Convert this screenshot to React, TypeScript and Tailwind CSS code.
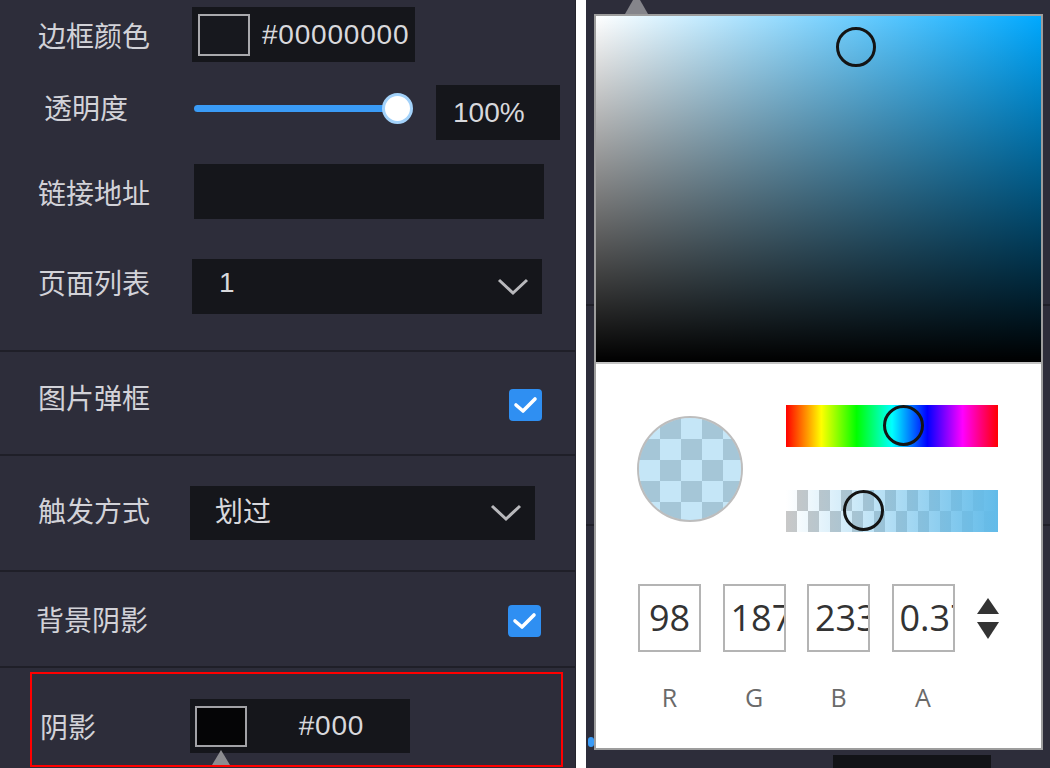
import React from "react";

const Chevron = () => (
  <svg width="32" height="18" viewBox="0 0 32 18">
    <polyline points="2,2 16,15 30,2" fill="none" stroke="#b8b8bc" strokeWidth="3" />
  </svg>
);

const Check = () => (
  <div className="w-[33px] h-[32px] rounded-[4px] bg-[#2f8ff2] flex items-center justify-center">
    <svg width="33" height="32" viewBox="0 0 33 32">
      <polyline points="7,16 14,22 26,10" fill="none" stroke="#ffffff" strokeWidth="3.6" strokeLinecap="round" strokeLinejoin="round" />
    </svg>
  </div>
);

const Divider = () => <div className="h-[2px] w-full bg-[#1f1f28] shrink-0" />;

export default function App() {
  return (
    <div className="w-[1050px] h-[768px] flex overflow-hidden bg-[#2d2d3a] font-['Noto_Sans_CJK_SC',sans-serif] text-[#d2d2d8]">
      {/* Left property panel */}
      <div className="w-[576px] h-full shrink-0 bg-[#2d2d3a] border-r border-[#24242d] flex flex-col">
        {/* Section 1 */}
        <div className="h-[350px] shrink-0 flex flex-col pt-[7px]">
          <div className="flex items-center h-[55px]">
            <div className="w-[192px] pl-[38px] text-[28px] leading-[34px]">边框颜色</div>
            <div className="w-[223px] h-[55px] bg-[#15161b] flex items-center pl-[6px]">
              <div className="w-[52px] h-[42px] border-2 border-[#a9a9ad] bg-[#17181e]" />
              <span className="ml-[12px] text-[28px] leading-[34px] tracking-[0.8px] font-['Liberation_Sans',sans-serif] text-[#d8d8dc]">#00000000</span>
            </div>
          </div>
          <div className="flex items-center h-[55px] mt-[23px]">
            <div className="w-[194px] pl-[44px] pb-[12px] text-[28px] leading-[34px]">透明度</div>
            <div className="relative w-[219px] h-[31px] mb-[9px] flex items-center">
              <div className="w-[203px] h-[7px] rounded-full bg-[#3a9bf6]" />
              <div className="absolute left-[188px] top-0 w-[31px] h-[31px] rounded-full bg-white border-[3px] border-[#a3d2fa]" />
            </div>
            <div className="ml-[23px] w-[124px] h-[55px] bg-[#15161b] flex items-center pl-[17px] text-[28px] leading-[34px] font-['Liberation_Sans',sans-serif] text-[#d8d8dc]">100%</div>
          </div>
          <div className="flex items-center h-[55px] mt-[24px]">
            <div className="w-[194px] pl-[38px] text-[28px] leading-[34px]">链接地址</div>
            <div className="w-[350px] h-[55px] bg-[#15161b]" />
          </div>
          <div className="flex items-center h-[55px] mt-[40px]">
            <div className="w-[192px] pl-[38px] pb-[10px] text-[28px] leading-[34px]">页面列表</div>
            <div className="w-[350px] h-[55px] bg-[#15161b] flex items-center justify-between pl-[27px] pr-[13px]">
              <span className="text-[28px] leading-[34px] font-['Liberation_Sans',sans-serif] text-[#d8d8dc] pb-[8px]">1</span>
              <Chevron />
            </div>
          </div>
        </div>
        <Divider />
        {/* Section 2 */}
        <div className="h-[102px] shrink-0 flex items-center justify-between pl-[38px] pr-[33px]">
          <div className="pb-[12px] text-[28px] leading-[34px]">图片弹框</div>
          <div className="pt-[3px]"><Check /></div>
        </div>
        <Divider />
        {/* Section 3 */}
        <div className="h-[114px] shrink-0 flex items-center">
          <div className="w-[190px] pl-[38px] pb-[6px] text-[28px] leading-[34px]">触发方式</div>
          <div className="w-[345px] h-[54px] bg-[#15161b] flex items-center justify-between pl-[25px] pr-[13px]">
            <span className="text-[28px] leading-[34px] text-[#d8d8dc] pb-[6px]">划过</span>
            <Chevron />
          </div>
        </div>
        <Divider />
        {/* Section 4 */}
        <div className="h-[94px] shrink-0 flex items-center justify-between pl-[36px] pr-[34px]">
          <div className="text-[28px] leading-[34px]">背景阴影</div>
          <div className="pt-[4px]"><Check /></div>
        </div>
        <Divider />
        {/* Section 5 */}
        <div className="flex-1 pt-[4px] pl-[30px]">
          <div className="w-[533px] h-[95px] border-2 border-[#ff0000] flex items-start pt-[25px] pl-[8px]">
            <div className="flex items-center h-[54px]">
              <div className="w-[150px] text-[28px] leading-[34px]">阴影</div>
              <div className="relative w-[220px] h-[54px] bg-[#15161b] flex items-center pl-[5px]">
                <div className="w-[52px] h-[41px] border-2 border-[#a2a2a6] bg-[#050506]" />
                <span className="flex-1 text-center pl-[6px] text-[28px] leading-[34px] tracking-[0.8px] font-['Liberation_Sans',sans-serif] text-[#d8d8dc]">#000</span>
                <svg className="absolute left-[22px] top-[51px]" width="18" height="15" viewBox="0 0 18 15">
                  <polygon points="9,0 18,15 0,15" fill="#8c8c90" />
                </svg>
              </div>
            </div>
          </div>
        </div>
      </div>

      {/* White gap */}
      <div className="w-[10px] h-full shrink-0 bg-white" />

      {/* Right area with color picker popup */}
      <div className="relative flex-1 h-full bg-[#2d2d3a]">
        <div className="h-full flex flex-col">
          <div className="h-[306px] border-b-2 border-[#1f1f28]" />
          <div className="h-[220px] border-b-2 border-[#1f1f28]" />
          <div className="flex-1 flex items-end pl-[247px]">
            <div className="w-[158px] h-[13px] bg-[#121317]" />
          </div>
        </div>
        <div className="absolute left-[2px] top-[737px] w-[6px] h-[10px] rounded-full bg-[#3a9bf6]" />
        <svg className="absolute left-[39px] top-0" width="23" height="14" viewBox="0 0 23 14">
          <polygon points="8,0 15,0 23,14 0,14" fill="#85858b" />
        </svg>

        <div className="absolute left-[8px] top-[14px] w-[449px] h-[736px] bg-white border-2 border-[#9d9d9d] flex flex-col">
          {/* Saturation / value area */}
          <div className="relative h-[348px] shrink-0 border-b-2 border-[#c4c4c4] bg-[linear-gradient(to_top,#000,transparent),linear-gradient(to_right,#fff,#00a9ff)]">
            <div className="absolute left-[240px] top-[11px] w-[40px] h-[40px] rounded-full border-[3px] border-[#141414]" />
          </div>

          {/* Preview + sliders */}
          <div className="flex items-center pl-[41px] pt-[41px]">
            <div className="relative w-[106px] h-[106px] rounded-full border-2 border-[#bdbdbd] overflow-hidden bg-[conic-gradient(#cccccc_25%,#ffffff_0_50%,#cccccc_0_75%,#ffffff_0)] bg-[length:42px_42px]">
              <div className="absolute inset-0 bg-[rgba(98,187,233,0.37)]" />
            </div>
            <div className="ml-[43px] flex flex-col gap-[43px]">
              <div className="relative w-[212px] h-[42px] bg-[linear-gradient(to_right,#f00,#ff0,#0f0,#0ff,#00f,#f0f,#f00)]">
                <div className="absolute left-[97px] top-0 w-[41px] h-[41px] rounded-full border-[3.5px] border-[#141414]" />
              </div>
              <div className="relative w-[212px] h-[42px] bg-[conic-gradient(#c8c8c8_25%,#ffffff_0_50%,#c8c8c8_0_75%,#ffffff_0)] bg-[length:22px_42px]">
                <div className="absolute inset-0 bg-[linear-gradient(to_right,rgba(98,187,233,0),rgb(98,187,233))]" />
                <div className="absolute left-[57px] top-0 w-[41px] h-[41px] rounded-full border-[3.5px] border-[#141414]" />
              </div>
            </div>
          </div>

          {/* RGBA inputs */}
          <div className="flex items-center pl-[42px] mt-[52px] font-['Open_Sans',sans-serif]">
            {["98", "187", "233", "0.37"].map((v, i) => (
              <div
                key={v}
                className={
                  "w-[63px] h-[68px] border-2 border-[#b4b4b4] px-[6px] overflow-hidden whitespace-nowrap text-center leading-[64px] text-[36px] text-[#333333] " +
                  (i > 0 ? "ml-[21.5px]" : "")
                }
              >
                {v}
              </div>
            ))}
            <svg className="ml-[22px]" width="22" height="41" viewBox="0 0 22 41">
              <polygon points="11,0 22,16 0,16" fill="#333333" />
              <polygon points="0,24 22,24 11,41" fill="#333333" />
            </svg>
          </div>
          <div className="flex items-center pl-[42px] mt-[30px] h-[30px] font-['Open_Sans',sans-serif]">
            {["R", "G", "B", "A"].map((v, i) => (
              <div
                key={v}
                className={"w-[63px] text-center text-[25px] leading-[30px] text-[#6a6a6a] " + (i > 0 ? "ml-[21.5px]" : "")}
              >
                {v}
              </div>
            ))}
          </div>
        </div>
      </div>
    </div>
  );
}
